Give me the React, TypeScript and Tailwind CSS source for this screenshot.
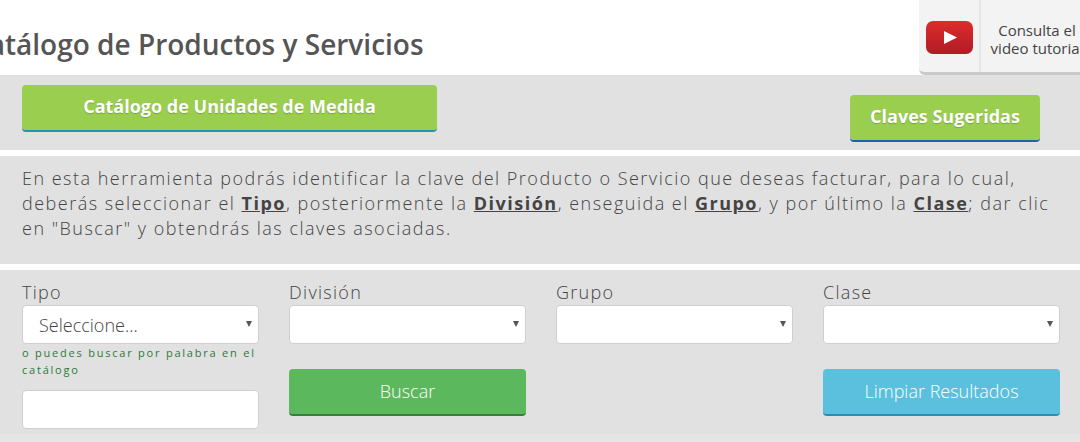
const selectClass =
  "relative h-[39px] w-full rounded border border-[#cfcfcf] bg-white"

function Caret() {
  return (
    <span className="absolute right-[6px] top-[15px] h-0 w-0 border-x-[3px] border-t-[6px] border-x-transparent border-t-[#555]" />
  )
}

function Field({ label, value }: { label: string; value?: string }) {
  return (
    <div>
      <label className="block h-[26px] pt-[1px] text-[18px] leading-[24px] font-light tracking-[1.3px] text-[#444]">
        {label}
      </label>
      <div className={selectClass}>
        {value && (
          <span className="absolute left-[16px] top-[7px] text-[18px] leading-[24px] font-light text-[#444]">
            {value}
          </span>
        )}
        <Caret />
      </div>
    </div>
  )
}

function YoutubeIcon() {
  return (
    <svg width="47" height="33" viewBox="0 0 47 33">
      <defs>
        <linearGradient id="yt" x1="0" y1="0" x2="0" y2="1">
          <stop offset="0" stopColor="#dd2c2c" />
          <stop offset="1" stopColor="#b01c24" />
        </linearGradient>
      </defs>
      <rect x="0" y="0" width="47" height="33" rx="7" fill="url(#yt)" />
      <path d="M18 10 L31 16.5 L18 23 Z" fill="#fff" />
    </svg>
  )
}

export default function App() {
  return (
    <div className="h-[442px] w-[1080px] overflow-hidden bg-white font-['Open_Sans',sans-serif]">
      <header className="flex h-[75px] items-start justify-between">
        <h1 className="ml-[-29px] mt-[25px] text-[28px] leading-[38px] font-semibold whitespace-nowrap text-[#555]">
          Catálogo de Productos y Servicios
        </h1>
        <div className="flex h-[75px] w-[161px] shrink-0 rounded-bl-md border-b-[3px] border-[#c9c9c9] bg-[#f3f3f3]">
          <div className="flex w-[62px] shrink-0 items-center justify-center border-r-2 border-[#e6e6e6] pt-[3px]">
            <YoutubeIcon />
          </div>
          <p className="w-[112px] shrink-0 pt-[21px] text-center text-[15px] leading-[18px] font-normal whitespace-nowrap text-[#444]">
            Consulta el
            <br />
            video tutorial
          </p>
        </div>
      </header>

      <section className="flex h-[75px] items-start justify-between bg-[#e1e1e1] pl-[22px] pr-[40px]">
        <button className="mt-[10px] h-[47px] w-[415px] rounded border-b-2 border-[#2a8fb5] bg-[#9ace4f] pb-[2px] text-[18px] font-bold text-white [text-shadow:0_1px_1px_rgba(0,0,0,0.2)]">
          Catálogo de Unidades de Medida
        </button>
        <button className="mt-[20px] h-[47px] w-[190px] rounded border-b-2 border-[#1f62b0] bg-[#9ace4f] pb-[2px] text-[18px] font-bold text-white [text-shadow:0_1px_1px_rgba(0,0,0,0.2)]">
          Claves Sugeridas
        </button>
      </section>

      <section className="mt-[6px] h-[108px] bg-[#e1e1e1] pl-[22px] pr-[20px] pt-[10px]">
        <p className="text-[18px] leading-[25px] font-light tracking-[1.49px] text-[#444]">
          En esta herramienta podrás identificar la clave del Producto o Servicio que deseas facturar, para lo cual,
          deberás seleccionar el <b className="font-bold underline">Tipo</b>, posteriormente la{" "}
          <b className="font-bold underline">División</b>, enseguida el <b className="font-bold underline">Grupo</b>, y
          por último la <b className="font-bold underline">Clase</b>; dar clic en "Buscar" y obtendrás las claves
          asociadas.
        </p>
      </section>

      <div className="mt-[6px] h-[172px] bg-[#e5e5e5]">
        <section className="grid h-[164px] grid-cols-4 gap-x-[30px] bg-[#e1e1e1] pl-[22px] pr-[20px] pt-[9px]">
          <div>
            <Field label="Tipo" value="Seleccione..." />
            <p className="text-[11px] leading-[17px] font-normal tracking-[1.78px] text-[#2a7a38]">
              o puedes buscar por palabra en el catálogo
            </p>
            <input className="mt-[12px] block h-[39px] w-full rounded border border-[#cfcfcf] bg-white" />
          </div>
          <div>
            <Field label="División" />
            <button className="mt-[25px] h-[47px] w-full rounded border-b-2 border-[#3a7d3c] bg-[#5cb85c] text-[18px] font-light text-white">
              Buscar
            </button>
          </div>
          <div>
            <Field label="Grupo" />
          </div>
          <div>
            <Field label="Clase" />
            <button className="mt-[25px] h-[47px] w-full rounded border-b-2 border-[#2a8fb0] bg-[#5bc0de] text-[18px] font-light text-white">
              Limpiar Resultados
            </button>
          </div>
        </section>
      </div>
    </div>
  )
}
